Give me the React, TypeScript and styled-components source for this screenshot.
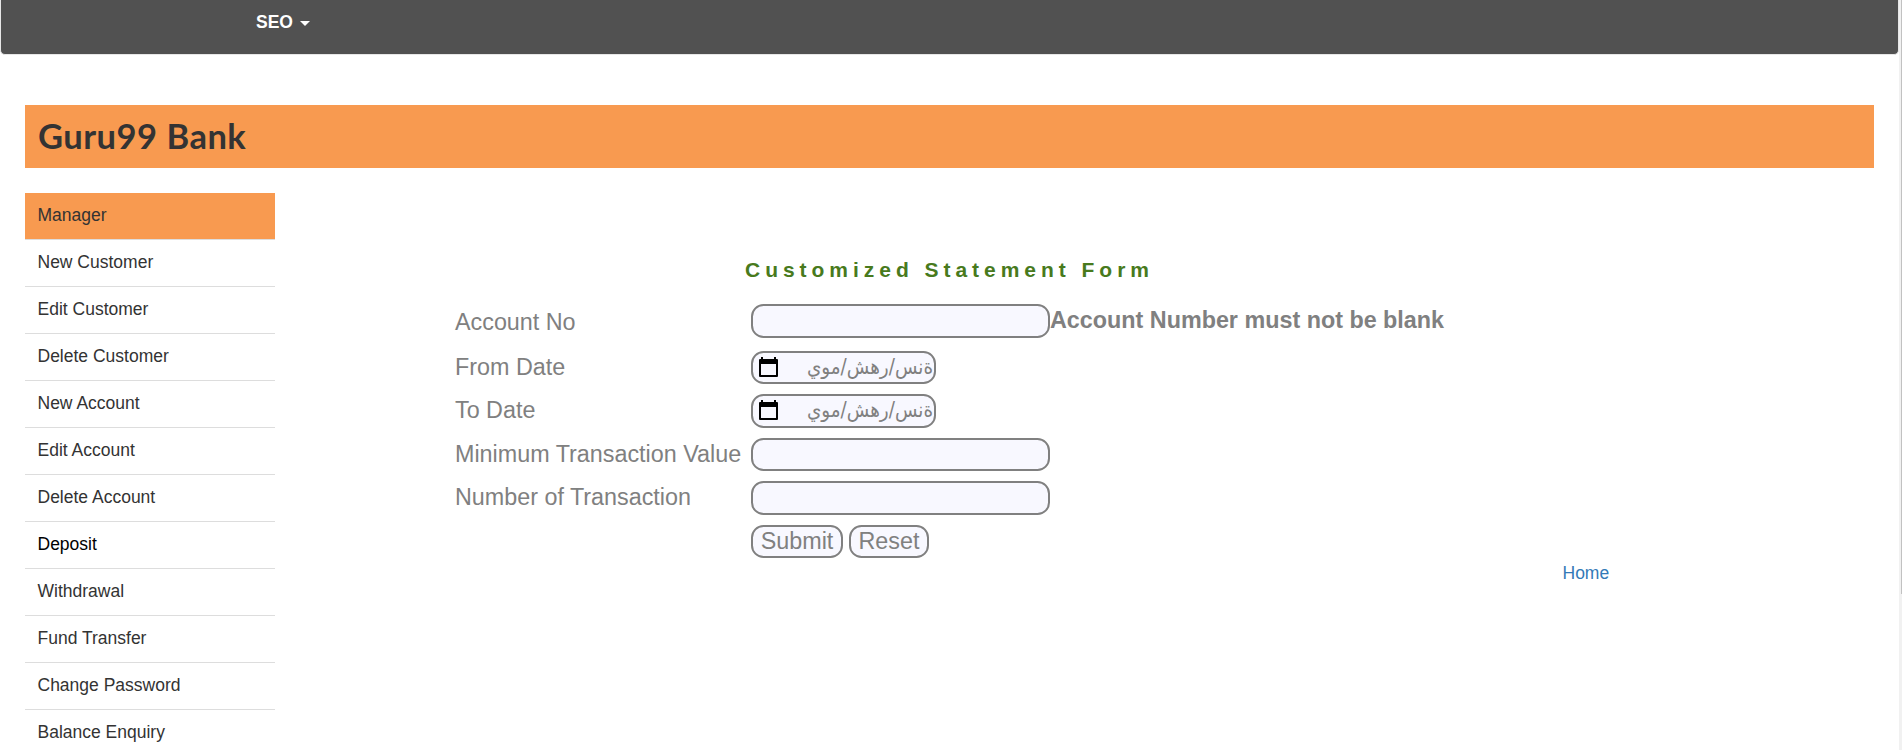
import React from "react";
import styled, { createGlobalStyle } from "styled-components";

const GlobalStyle = createGlobalStyle`
  * { box-sizing: border-box; }
  body {
    margin: 0;
    background: #fff;
    color: #333;
    font-family: "Liberation Sans", Arial, sans-serif;
    font-size: 17.5px;
    overflow: hidden;
  }
`;

const Viewport = styled.div`
  display: flex;
  height: 750px;
  overflow: hidden;
`;

const Page = styled.div`
  width: 1899px;
  flex: none;
`;

const ScrollTrack = styled.div`
  display: flex;
  justify-content: flex-end;
  width: 3px;
  background: #f1f1f1;
`;

const ScrollThumb = styled.div`
  width: 1px;
  height: 594px;
  background: #c1c1c1;
`;

const Navbar = styled.nav`
  height: 55px;
  padding: 10px 0 0 255px;
  border: 1px solid #e7e7e7;
  border-top: 0;
  border-radius: 0 0 5px 5px;
  background: #515151;
`;

const NavItem = styled.a`
  display: inline-flex;
  align-items: center;
  gap: 7px;
  color: #fff;
  font-weight: bold;
  line-height: 24px;
`;

const Caret = styled.svg`
  width: 10px;
  height: 5px;
  margin-top: 3px;
`;

const Banner = styled.header`
  height: 63px;
  margin: 50px 25px 25px;
  padding-left: 13px;
  background: #f89a50;
`;

const BankName = styled.h2`
  margin: 0;
  font-family: Lato, "Open Sans", sans-serif;
  font-size: 34.5px;
  font-weight: 700;
  line-height: 61px;
  letter-spacing: 0.5px;
`;

const Columns = styled.div`
  display: flex;
  padding-left: 25px;
`;

const Menu = styled.ul`
  width: 250px;
  margin: 0;
  padding: 0;
  list-style: none;
`;

const MenuItem = styled.li<{ $current?: boolean; $hovered?: boolean }>`
  height: 47px;
  padding: 0 12.5px;
  border-bottom: 1px solid #ddd;
  background: ${(p) => (p.$current ? "#f89a50" : "transparent")};
  color: ${(p) => (p.$hovered ? "#000" : "#333")};
  line-height: 45px;
`;

const Content = styled.main`
  display: flex;
  flex-direction: column;
  width: 1500px;
  padding: 64px 0 0 180px;
`;

const FormTitle = styled.p`
  margin: 0 0 0 290px;
  color: #487a1d;
  font-size: 21px;
  font-weight: bold;
  letter-spacing: 4.97px;
  line-height: 26px;
`;

const Form = styled.form`
  display: grid;
  grid-template-columns: 296px auto;
  grid-template-rows: 47px 43px 44px 43px 44px 34px;
  margin-top: 21px;
  color: #808080;
  font-size: 23.33px;
`;

const Label = styled.label<{ $low?: boolean }>`
  padding-top: ${(p) => (p.$low ? 5 : 3)}px;
  line-height: 27px;
`;

const Field = styled.div`
  display: flex;
  align-items: flex-start;
  gap: 6px;
`;

const AccountField = styled(Field)`
  gap: 0;
`;

const TextInput = styled.input<{ $tall?: boolean }>`
  width: 299px;
  height: ${(p) => (p.$tall ? 34 : 33)}px;
  padding: 1px 6px;
  border: 2px solid #808080;
  border-radius: 12.5px;
  outline: 0;
  background: #f8f8ff;
`;

const DateInput = styled.div<{ $tall?: boolean }>`
  display: flex;
  align-items: flex-start;
  justify-content: space-between;
  width: 185px;
  height: ${(p) => (p.$tall ? 34 : 33)}px;
  padding: 0 1px 0 6px;
  border: 2px solid #808080;
  border-radius: 12.5px;
  background: #f8f8ff;
`;

const CalendarIcon = styled.svg`
  width: 19px;
  height: 20px;
  margin-top: 4px;
  flex: none;
`;

const DateText = styled.span`
  font-family: "DejaVu Sans Condensed", "DejaVu Sans", sans-serif;
  font-size: 20.4px;
  font-stretch: condensed;
  line-height: 28px;
  white-space: nowrap;
`;

const Button = styled.button<{ $width: number }>`
  width: ${(p) => p.$width}px;
  height: 33px;
  padding: 0;
  border: 2px solid #808080;
  border-radius: 12.5px;
  background: #f8f8ff;
  color: #808080;
  font: 23.33px/27px "Liberation Sans", Arial, sans-serif;
`;

const ErrorText = styled.span`
  padding-top: 3px;
  font-weight: bold;
  line-height: 27px;
`;

const HomeLink = styled.a`
  align-self: flex-start;
  margin: 3px 0 0 1107.5px;
  color: #337ab7;
  line-height: 22px;
  text-decoration: none;
`;

const menuItems = [
  "Manager",
  "New Customer",
  "Edit Customer",
  "Delete Customer",
  "New Account",
  "Edit Account",
  "Delete Account",
  "Deposit",
  "Withdrawal",
  "Fund Transfer",
  "Change Password",
  "Balance Enquiry",
];

function DatePicker({ tall }: { tall?: boolean }) {
  return (
    <DateInput $tall={tall}>
      <CalendarIcon viewBox="0 0 19 20">
        <path d="M2 0h2v2h11V0h2v2h1a1 1 0 0 1 1 1v16a1 1 0 0 1-1 1H1a1 1 0 0 1-1-1V3a1 1 0 0 1 1-1h1zM2 7v11h15V7z" fill="#000" fillRule="evenodd" />
      </CalendarIcon>
      <DateText dir="rtl" lang="ar">ةنس/رهش/موي</DateText>
    </DateInput>
  );
}

export default function App() {
  return (
    <>
      <GlobalStyle />
      <Viewport>
        <Page>
          <Navbar>
            <NavItem>
              SEO
              <Caret viewBox="0 0 10 5">
                <path d="M0 0h10L5 5z" fill="#fff" />
              </Caret>
            </NavItem>
          </Navbar>
          <Banner>
            <BankName>Guru99 Bank</BankName>
          </Banner>
          <Columns>
            <Menu>
              {menuItems.map((item) => (
                <MenuItem key={item} $current={item === "Manager"} $hovered={item === "Deposit"}>
                  {item}
                </MenuItem>
              ))}
            </Menu>
            <Content>
              <FormTitle>Customized Statement Form</FormTitle>
              <Form>
                <Label $low>Account No</Label>
                <AccountField>
                  <TextInput $tall />
                  <ErrorText>Account Number must not be blank</ErrorText>
                </AccountField>
                <Label>From Date</Label>
                <Field>
                  <DatePicker />
                </Field>
                <Label>To Date</Label>
                <Field>
                  <DatePicker tall />
                </Field>
                <Label>Minimum Transaction Value</Label>
                <Field>
                  <TextInput />
                </Field>
                <Label>Number of Transaction</Label>
                <Field>
                  <TextInput $tall />
                </Field>
                <span />
                <Field>
                  <Button type="button" $width={92}>Submit</Button>
                  <Button type="button" $width={80}>Reset</Button>
                </Field>
              </Form>
              <HomeLink>Home</HomeLink>
            </Content>
          </Columns>
        </Page>
        <ScrollTrack>
          <ScrollThumb />
        </ScrollTrack>
      </Viewport>
    </>
  );
}
